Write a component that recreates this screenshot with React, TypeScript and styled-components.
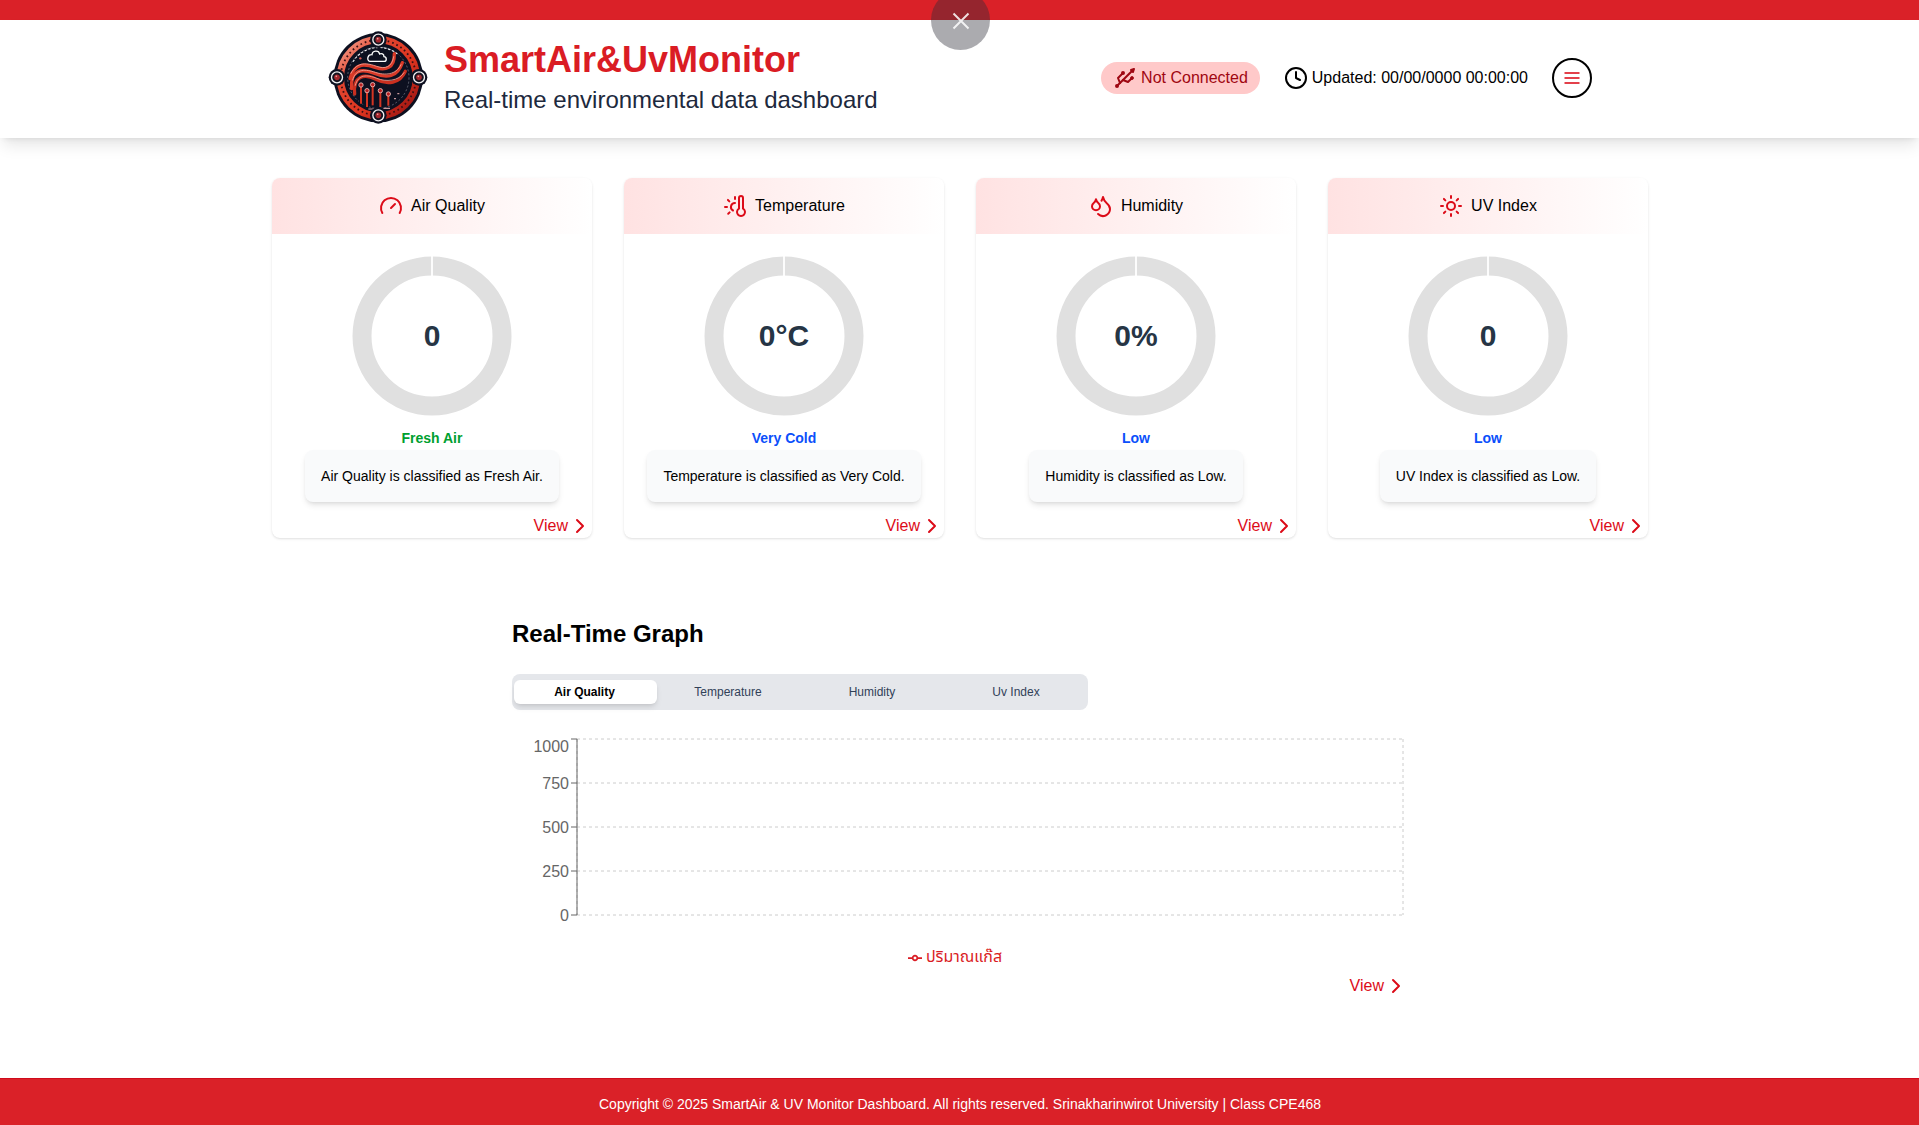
import React from 'react';
import styled, { createGlobalStyle } from 'styled-components';
import { ChevronRight, Clock, Droplets, Gauge, Sun, Usb } from 'lucide-react';

const GlobalStyle = createGlobalStyle`
  *, *::before, *::after { box-sizing: border-box; }
  html, body { margin: 0; padding: 0; }
  body {
    background: #fff;
    color: #000;
    font-family: 'Liberation Sans', Arial, 'Noto Sans Thai', 'DejaVu Sans', sans-serif;
    font-size: 16px;
    line-height: 24px;
    overflow: hidden;
  }
  h1, h2, p { margin: 0; }
  button { font: inherit; border: 0; background: none; padding: 0; cursor: pointer; }
  svg { display: block; flex-shrink: 0; }
`;

const Page = styled.div`
  display: flex;
  flex-direction: column;
  width: 1920px;
  height: 1125px;
`;

const TopBar = styled.div`
  height: 20px;
  flex-shrink: 0;
  background: #da2128;
`;

const HeaderBar = styled.header`
  height: 118px;
  flex-shrink: 0;
  background: #fff;
  box-shadow: 0 10px 15px -3px rgba(0, 0, 0, 0.1), 0 4px 6px -4px rgba(0, 0, 0, 0.1);
`;

const HeaderInner = styled.div`
  display: flex;
  align-items: center;
  justify-content: space-between;
  width: 1264px;
  height: 116px;
  margin: 0 auto;
`;

const Brand = styled.div`
  display: flex;
  align-items: center;
  gap: 16px;
`;

const Title = styled.h1`
  font-size: 36px;
  line-height: 40px;
  font-weight: 700;
  color: #da1c24;
`;

const Subtitle = styled.p`
  font-size: 24px;
  line-height: 32px;
  padding-top: 4px;
  height: 36px;
  color: #1d293d;
`;

const HeaderTools = styled.div`
  display: flex;
  align-items: center;
  gap: 24px;
`;

const Badge = styled.div`
  display: flex;
  align-items: center;
  gap: 4px;
  height: 32px;
  padding: 0 12px;
  border-radius: 16px;
  background: #ffc9c9;
  color: #9f0712;
`;

const Updated = styled.div`
  display: flex;
  align-items: center;
  gap: 4px;
`;

const MenuButton = styled.button`
  display: flex;
  align-items: center;
  justify-content: center;
  width: 40px;
  height: 40px;
  border: 2px solid #000;
  border-radius: 50%;
`;

const CloseBubble = styled.div`
  position: fixed;
  top: -10px;
  left: 931px;
  display: flex;
  align-items: center;
  justify-content: center;
  width: 59px;
  height: 60px;
  padding-top: 1px;
  border-radius: 50%;
  background: rgba(45, 46, 55, 0.4);
  z-index: 10;
`;

const Main = styled.main`
  flex: 1;
  display: flex;
  flex-direction: column;
  align-items: center;
`;

const CardGrid = styled.section`
  display: grid;
  grid-template-columns: repeat(4, 320px);
  gap: 32px;
  margin-top: 40px;
`;

const Card = styled.article`
  display: flex;
  flex-direction: column;
  align-items: center;
  height: 360px;
  background: #fff;
  border-radius: 8px;
  overflow: hidden;
  box-shadow: 0 1px 3px rgba(0, 0, 0, 0.1), 0 1px 2px -1px rgba(0, 0, 0, 0.1);
`;

const CardHeader = styled.div`
  display: flex;
  align-items: center;
  justify-content: center;
  gap: 8px;
  align-self: stretch;
  height: 56px;
  background: linear-gradient(to right, #ffe2e2, #fff);

  svg { color: #dc0b18; }
`;

const Donut = styled.div`
  display: grid;
  place-items: center;
  width: 200px;
  height: 200px;
  margin-top: 2px;

  > * { grid-area: 1 / 1; }
`;

const DonutValue = styled.span`
  font-size: 30px;
  line-height: 36px;
  font-weight: 700;
  color: #263545;
`;

const Status = styled.p<{ $tone: string }>`
  font-size: 14px;
  line-height: 20px;
  font-weight: 700;
  margin-top: -8px;
  color: ${(p) => p.$tone};
`;

const Note = styled.p`
  display: flex;
  align-items: center;
  height: 52px;
  margin-top: 2px;
  padding: 0 16px;
  font-size: 14px;
  line-height: 20px;
  background: #f9fafb;
  border-radius: 8px;
  box-shadow: 0 4px 6px -1px rgba(0, 0, 0, 0.1), 0 2px 4px -2px rgba(0, 0, 0, 0.1);
`;

const ViewLink = styled.button<{ $push: number }>`
  display: flex;
  align-items: center;
  align-self: flex-end;
  height: 24px;
  margin-top: ${(p) => p.$push}px;
  color: #dc0b18;
`;

const GraphSection = styled.section`
  display: flex;
  flex-direction: column;
  width: 896px;
  margin-top: 80px;
`;

const GraphTitle = styled.h2`
  font-size: 24px;
  line-height: 32px;
  font-weight: 700;
`;

const Tabs = styled.div`
  display: grid;
  grid-template-columns: repeat(4, 1fr);
  align-items: center;
  width: 576px;
  height: 36px;
  margin-top: 24px;
  border-radius: 8px;
  background: #e5e7eb;
`;

const Tab = styled.button<{ $active?: boolean }>`
  height: 24px;
  margin: ${(p) => (p.$active ? '0 -1px 0 2px' : '0')};
  padding-right: ${(p) => (p.$active ? '2px' : '0')};
  border-radius: 6px;
  font-size: 12px;
  line-height: 16px;
  font-weight: ${(p) => (p.$active ? 700 : 400)};
  color: ${(p) => (p.$active ? '#000' : '#314158')};
  background: ${(p) => (p.$active ? '#fff' : 'transparent')};
  box-shadow: ${(p) =>
    p.$active ? '0 4px 6px -1px rgba(0,0,0,.1), 0 2px 4px -2px rgba(0,0,0,.1)' : 'none'};
`;

const ChartSvg = styled.svg`
  margin-top: 24px;

  text { font-size: 16px; fill: #666; text-anchor: end; }
`;

const Legend = styled.div`
  display: flex;
  align-items: center;
  justify-content: center;
  gap: 4px;
  height: 24px;
  margin-top: -1px;
  padding-right: 10px;
  color: #da1c24;

  svg { margin-top: 2px; }
`;

const Footer = styled.footer`
  height: 47px;
  flex-shrink: 0;
  padding-top: 15px;
  border-top: 1px solid #d00a1c;
  background: #da2128;
  color: #fff;
  font-size: 14px;
  line-height: 20px;
  text-align: center;
`;

/* Circular emblem: studded red ring, four corner lenses, wind waves, cloud and sensor pins. */
const Logo = () => (
  <svg width="100" height="100" viewBox="24 24 300 300">
    <defs>
      <linearGradient id="ring" x1="0" y1="0" x2="1" y2="1">
        <stop offset="0.1" stopColor="#f08a76" />
        <stop offset="0.3" stopColor="#e2452f" />
        <stop offset="0.6" stopColor="#de3520" />
        <stop offset="0.95" stopColor="#9c1512" />
      </linearGradient>
    </defs>
    <circle cx="175" cy="173" r="134" fill="#0d1020" />
    <circle cx="175" cy="173" r="114" fill="none" stroke="url(#ring)" strokeWidth="22" />
    <circle cx="175" cy="173" r="113" fill="none" stroke="#3a0f14" strokeWidth="5.5" strokeDasharray="5 9" />
    <circle cx="175" cy="173" r="92" fill="none" stroke="#6c707e" strokeWidth="2.5" strokeDasharray="6 6" />
    <path d="M99 125A91 91 0 0 1 235 104" fill="none" stroke="#f2f2f4" strokeWidth="3.5" strokeDasharray="7 5" />
    <g fill="none" strokeLinecap="round">
      <path d="M90 176C104 122 142 134 168 143S224 146 223 101" stroke="#d93a28" strokeWidth="10" />
      <path d="M95 206C90 150 124 144 162 160S232 172 247 128" stroke="#d93a28" strokeWidth="10" />
      <path d="M104 222C98 166 134 160 168 178S240 190 256 154" stroke="#c92f20" strokeWidth="10" />
      <path d="M93 160C112 122 144 130 170 139S216 142 221 110" stroke="#f3a79a" strokeWidth="2.5" />
      <path d="M98 180C108 144 138 148 166 157S228 166 243 134" stroke="#f3a79a" strokeWidth="2.5" />
      <path d="M106 196C114 162 142 164 170 175S236 184 252 158" stroke="#f3a79a" strokeWidth="2.5" />
    </g>
    <path
      d="M150 124h42c9 0 9-13 0-14 0-8-8-11-13-8-3-13-22-11-23 2-14-1-17 18-6 20z"
      fill="#0d1020"
      stroke="#fff"
      strokeWidth="4"
    />
    <circle cx="121" cy="115" r="3.5" fill="#e65a55" />
    {[
      [123, 195, 251],
      [141, 212, 261],
      [158, 194, 256],
      [181, 212, 261],
      [205, 222, 257],
    ].map(([x, top, bottom]) => (
      <g key={x}>
        <path d={`M${x} ${top}V${bottom}`} stroke="#0d1020" strokeWidth="12" />
        <path d={`M${x} ${top}V${bottom}`} stroke="#d43522" strokeWidth="6" />
        <circle cx={x} cy={top} r="6.5" fill="#b51f22" stroke="#f0c4bf" strokeWidth="2.5" />
      </g>
    ))}
    <path d="M232 221h6M222 236h6M145 267h20M190 265h20" stroke="#c99a9e" strokeWidth="3.5" />
    {[
      [175, 59],
      [51, 172],
      [297, 172],
      [175, 286],
    ].map(([x, y]) => (
      <g key={`${x}-${y}`}>
        <circle cx={x} cy={y} r="25" fill="#0d1020" />
        <circle cx={x} cy={y} r="16.5" fill="#14131f" stroke="#f1f1f3" strokeWidth="4" />
        <circle cx={x} cy={y} r="8.5" fill="#a3262c" />
        <circle cx={x - 2} cy={y - 3} r="2.5" fill="#f4a09c" />
      </g>
    ))}
  </svg>
);

const ThermometerSun = ({ size }: { size: number }) => (
  <svg
    width={size}
    height={size}
    viewBox="0 0 24 24"
    fill="none"
    stroke="currentColor"
    strokeWidth="2"
    strokeLinecap="round"
    strokeLinejoin="round"
  >
    <path d="M12 9a4 4 0 0 0-2 7.5" />
    <path d="M12 3v2" />
    <path d="m6.6 18.4-1.4 1.4" />
    <path d="M20 4v10.54a4 4 0 1 1-4 0V4a2 2 0 0 1 4 0Z" />
    <path d="M4 13H2" />
    <path d="M6.34 7.34 4.93 5.93" />
  </svg>
);

const DonutRing = () => (
  <svg width="200" height="200" viewBox="0 0 200 200">
    <circle cx="100" cy="100" r="70" fill="none" stroke="#e0e0e0" strokeWidth="19" />
    <path d="M100 18V42" stroke="#fff" strokeWidth="1.8" />
  </svg>
);

type Metric = {
  name: string;
  icon: React.ComponentType<{ size: number }>;
  value: string;
  status: string;
  tone: string;
};

const metrics: Metric[] = [
  { name: 'Air Quality', icon: Gauge, value: '0', status: 'Fresh Air', tone: '#00a030' },
  { name: 'Temperature', icon: ThermometerSun, value: '0°C', status: 'Very Cold', tone: '#0b4ffb' },
  { name: 'Humidity', icon: Droplets, value: '0%', status: 'Low', tone: '#0b4ffb' },
  { name: 'UV Index', icon: Sun, value: '0', status: 'Low', tone: '#0b4ffb' },
];

const View = ({ push }: { push: number }) => (
  <ViewLink $push={push}>
    View
    <ChevronRight size={24} />
  </ViewLink>
);

const MetricCard = ({ name, icon: Icon, value, status, tone }: Metric) => (
  <Card>
    <CardHeader>
      <Icon size={24} />
      {name}
    </CardHeader>
    <Donut>
      <DonutRing />
      <DonutValue>{value}</DonutValue>
    </Donut>
    <Status $tone={tone}>{status}</Status>
    <Note>
      {name} is classified as {status}.
    </Note>
    <View push={12} />
  </Card>
);

const ticks = [1000, 750, 500, 250, 0];

const Chart = () => (
  <ChartSvg width="896" height="212" viewBox="0 0 896 212">
    <g stroke="#ccc" strokeDasharray="3 3">
      {ticks.map((t, i) => (
        <line key={t} x1="65" x2="891" y1={5 + i * 44} y2={5 + i * 44} />
      ))}
      <line x1="65" x2="65" y1="5" y2="181" />
      <line x1="891" x2="891" y1="5" y2="181" />
    </g>
    <line x1="65" x2="65" y1="5" y2="181" stroke="#666" />
    {ticks.map((t, i) => (
      <g key={t}>
        <line x1="59" x2="65" y1={5 + i * 44} y2={5 + i * 44} stroke="#666" />
        <text x="57" y={i === 0 ? 17.7 : 10.7 + i * 44}>
          {t}
        </text>
      </g>
    ))}
  </ChartSvg>
);

export default function App() {
  return (
    <Page>
      <GlobalStyle />
      <TopBar />
      <HeaderBar>
        <HeaderInner>
          <Brand>
            <Logo />
            <div>
              <Title>SmartAir&amp;UvMonitor</Title>
              <Subtitle>Real-time environmental data dashboard</Subtitle>
            </div>
          </Brand>
          <HeaderTools>
            <Badge>
              <Usb size={24} />
              Not Connected
            </Badge>
            <Updated>
              <Clock size={24} />
              Updated: 00/00/0000 00:00:00
            </Updated>
            <MenuButton aria-label="Menu">
              <svg width="16" height="14" viewBox="0 0 16 14" stroke="#e3404a" strokeWidth="2">
                <path d="M0.5 2h15M0.5 7h15M0.5 12h15" />
              </svg>
            </MenuButton>
          </HeaderTools>
        </HeaderInner>
      </HeaderBar>
      <Main>
        <CardGrid>
          {metrics.map((m) => (
            <MetricCard key={m.name} {...m} />
          ))}
        </CardGrid>
        <GraphSection>
          <GraphTitle>Real-Time Graph</GraphTitle>
          <Tabs>
            <Tab $active>Air Quality</Tab>
            <Tab>Temperature</Tab>
            <Tab>Humidity</Tab>
            <Tab>Uv Index</Tab>
          </Tabs>
          <Chart />
          <Legend>
            <svg width="14" height="14" viewBox="0 0 32 32" fill="none" stroke="#da1c24" strokeWidth="4">
              <path d="M0 16h10.67A5.33 5.33 0 1 1 21.33 16H32M21.33 16A5.33 5.33 0 1 1 10.67 16" />
            </svg>
            ปริมาณแก๊ส
          </Legend>
          <View push={5} />
        </GraphSection>
      </Main>
      <Footer>
        Copyright © 2025 SmartAir &amp; UV Monitor Dashboard. All rights reserved. Srinakharinwirot
        University | Class CPE468
      </Footer>
      <CloseBubble>
        <svg width="18" height="18" viewBox="0 0 18 18" stroke="#fff" strokeOpacity="0.85" strokeWidth="2">
          <path d="M1.5 1.5l15 15M16.5 1.5l-15 15" />
        </svg>
      </CloseBubble>
    </Page>
  );
}
